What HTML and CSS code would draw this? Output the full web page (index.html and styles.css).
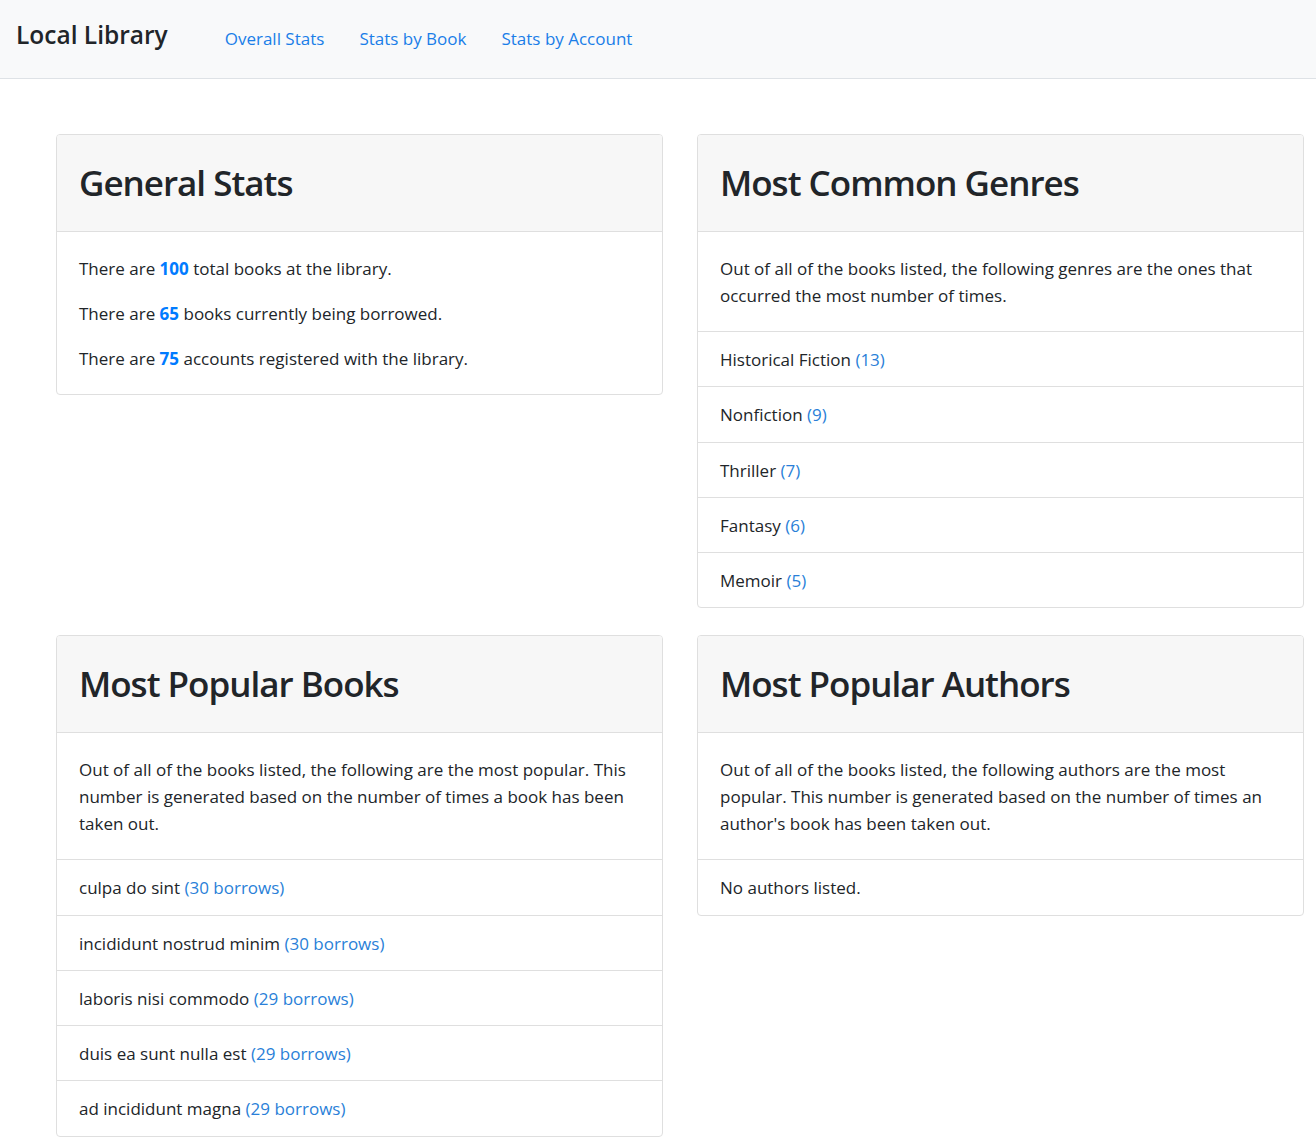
FILE: index.html
```html
<!DOCTYPE html>
<html lang="en">
<head>
<meta charset="utf-8">
<title>Local Library</title>
<link rel="stylesheet" href="styles.css">
</head>
<body>
<nav class="navbar">
  <a class="brand" href="#">Local Library</a>
  <ul class="nav">
    <li><a href="#">Overall Stats</a></li>
    <li><a href="#">Stats by Book</a></li>
    <li><a href="#">Stats by Account</a></li>
  </ul>
</nav>
<main class="grid">
  <section class="card">
    <header class="card-header"><h1>General Stats</h1></header>
    <div class="card-body">
      <p>There are <strong>100</strong> total books at the library.</p>
      <p>There are <strong>65</strong> books currently being borrowed.</p>
      <p>There are <strong>75</strong> accounts registered with the library.</p>
    </div>
  </section>
  <section class="card">
    <header class="card-header"><h1>Most Common Genres</h1></header>
    <div class="card-body">
      <p>Out of all of the books listed, the following genres are the ones that occurred the most number of times.</p>
    </div>
    <ul class="list">
      <li>Historical Fiction <span class="count">(13)</span></li>
      <li>Nonfiction <span class="count">(9)</span></li>
      <li>Thriller <span class="count">(7)</span></li>
      <li>Fantasy <span class="count">(6)</span></li>
      <li>Memoir <span class="count">(5)</span></li>
    </ul>
  </section>
  <section class="card">
    <header class="card-header"><h1>Most Popular Books</h1></header>
    <div class="card-body">
      <p>Out of all of the books listed, the following are the most popular. This number is generated based on the number of times a book has been taken out.</p>
    </div>
    <ul class="list">
      <li>culpa do sint <span class="count">(30 borrows)</span></li>
      <li>incididunt nostrud minim <span class="count">(30 borrows)</span></li>
      <li>laboris nisi commodo <span class="count">(29 borrows)</span></li>
      <li>duis ea sunt nulla est <span class="count">(29 borrows)</span></li>
      <li>ad incididunt magna <span class="count">(29 borrows)</span></li>
    </ul>
  </section>
  <section class="card">
    <header class="card-header"><h1>Most Popular Authors</h1></header>
    <div class="card-body">
      <p>Out of all of the books listed, the following authors are the most popular. This number is generated based on the number of times an author's book has been taken out.</p>
    </div>
    <ul class="list">
      <li>No authors listed.</li>
    </ul>
  </section>
</main>
</body>
</html>
```

FILE: styles.css
```css
* { box-sizing: border-box; }
html, body { margin: 0; padding: 0; }
body {
  font-family: "Open Sans", "Noto Sans", sans-serif;
  font-size: 17px;
  line-height: 27px;
  color: #212529;
  background: #fff;
}
a { text-decoration: none; }

.navbar {
  display: flex;
  align-items: center;
  height: 79px;
  padding: 0 16px 6px;
  background: #f8f9fa;
  border-bottom: 1px solid #dee2e6;
}
.brand {
  font-size: 24.5px;
  font-weight: 600;
  color: #212529;
  margin-right: 57px;
  padding-bottom: 3px;
}
.nav {
  display: flex;
  gap: 35px;
  list-style: none;
  margin: 5px 0 0;
  padding: 0;
}
.nav a { color: #1a7ee8; font-size: 17px; }

.grid {
  display: grid;
  grid-template-columns: 607px 607px;
  column-gap: 34px;
  row-gap: 27px;
  align-items: start;
  padding: 55px 0 0 56px;
}
.card {
  border: 1px solid #dfdfdf;
  border-radius: 4px;
  overflow: hidden;
  background: #fff;
}
.card-header {
  background: #f7f7f7;
  border-bottom: 1px solid #dfdfdf;
  padding: 24px 22px 24px;
}
.card-header h1 {
  margin: 0;
  font-size: 35px;
  line-height: 48px;
  font-weight: 600;
  letter-spacing: -1px;
  color: #212529;
}
.card-body { padding: 22.5px 22px; }
.card-body p { margin: 0 0 18px; }
.card-body p:last-child { margin-bottom: 0; }
.card-body strong { color: #007bff; font-weight: 700; }

.list { list-style: none; margin: 0; padding: 0; }
.list li {
  padding: 14px 22px 13.25px;
  border-top: 1px solid #dfdfdf;
}
.count { color: #2a7fd8; }
```
